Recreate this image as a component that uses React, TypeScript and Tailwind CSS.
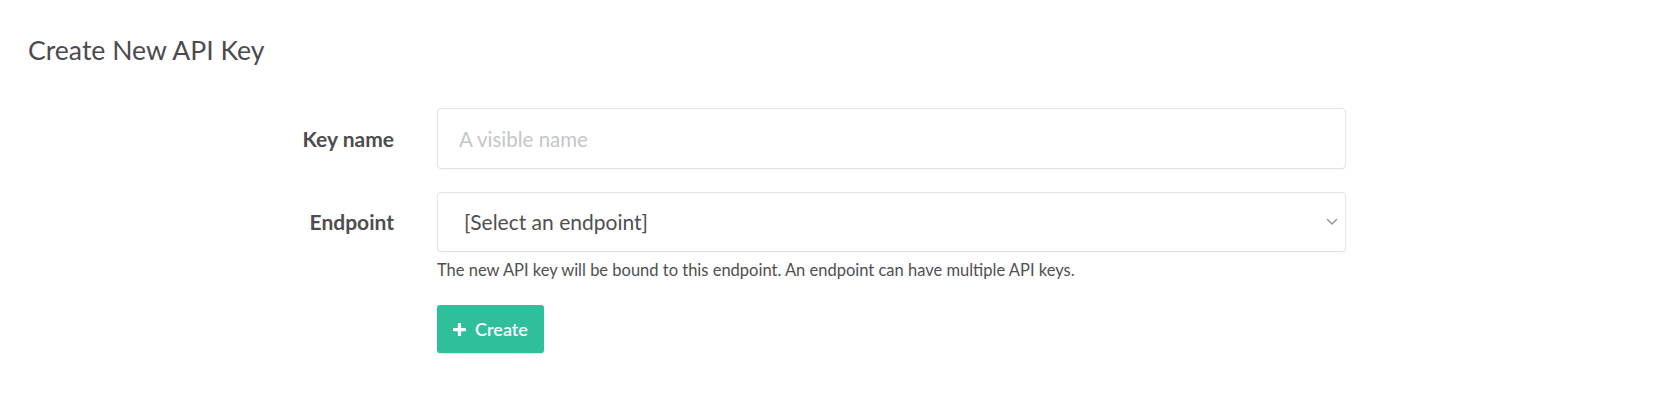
import { useState } from 'react';

const font = { fontFamily: 'Lato, "Noto Sans", sans-serif' };

export default function App() {
  const [name, setName] = useState('');
  const [endpoint, setEndpoint] = useState('');

  return (
    <div className="min-h-[401px] w-full bg-white pl-[28px] pt-[34px]" style={font}>
      <h1 className="text-[26.6px] leading-[32px] font-normal text-[#4b4b4d]">
        Create New API Key
      </h1>

      <form
        className="mt-[42px] grid grid-cols-[366px_909px] items-center gap-x-[43px]"
        onSubmit={(e) => e.preventDefault()}
      >
        <label
          htmlFor="key-name"
          className="text-right text-[21px] font-bold text-[#4d4d4f]"
        >
          Key name
        </label>
        <input
          id="key-name"
          value={name}
          onChange={(e) => setName(e.target.value)}
          placeholder="A visible name"
          className="h-[61px] w-full rounded-[4px] border border-[#e4e4e6] bg-white px-[21px] text-[20.5px] text-[#555] shadow-[0_1px_2px_rgba(0,0,0,0.04)] outline-none placeholder:text-[#c3c6ca]"
        />

        <label
          htmlFor="endpoint"
          className="mt-[23px] text-right text-[21px] font-bold text-[#4d4d4f]"
        >
          Endpoint
        </label>
        <div className="relative mt-[23px]">
          <select
            id="endpoint"
            value={endpoint}
            onChange={(e) => setEndpoint(e.target.value)}
            className="h-[60px] w-full appearance-none rounded-[4px] border border-[#e4e4e6] bg-white px-[26px] text-[21px] text-[#4f4f51] shadow-[0_1px_2px_rgba(0,0,0,0.04)] outline-none"
          >
            <option value="">[Select an endpoint]</option>
          </select>
          <svg
            className="pointer-events-none absolute right-[8px] top-1/2 -translate-y-1/2"
            width="12"
            height="8"
            viewBox="0 0 12 8"
            fill="none"
          >
            <path d="M1.5 1.5 6 6l4.5-4.5" stroke="#9a9a9c" strokeWidth="1.6" strokeLinecap="round" strokeLinejoin="round" />
          </svg>
        </div>

        <div />
        <p className="mt-[8px] text-[16.5px] leading-[20px] text-[#4f4f51]">
          The new API key will be bound to this endpoint. An endpoint can have multiple API keys.
        </p>

        <div />
        <div className="mt-[25px]">
          <button
            type="submit"
            className="flex h-[48px] w-[107px] items-center justify-center gap-[9px] rounded-[3px] bg-[#2fbf9b] text-[18px] font-semibold text-white shadow-[0_1px_2px_rgba(0,0,0,0.12)]"
          >
            <svg width="13" height="13" viewBox="0 0 12 12">
              <path d="M6 1v10M1 6h10" stroke="white" strokeWidth="3" strokeLinecap="round" />
            </svg>
            Create
          </button>
        </div>
      </form>
    </div>
  );
}
